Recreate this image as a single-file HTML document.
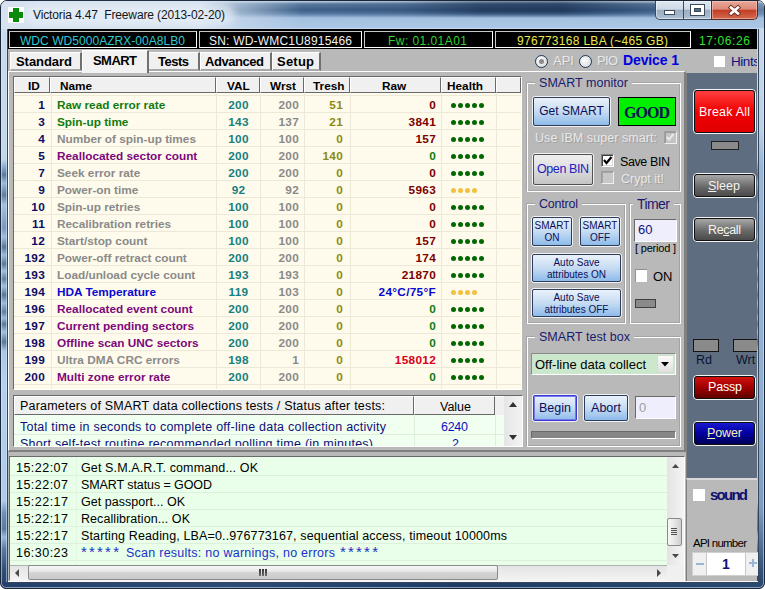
<!DOCTYPE html><html><head><meta charset="utf-8"><style>
html,body{margin:0;padding:0;}
body{width:765px;height:590px;position:relative;overflow:hidden;background:#ffffff;font-family:'Liberation Sans', sans-serif;}
div{box-sizing:border-box;}
</style></head><body>
<div style="position:absolute;left:0;top:0;width:765px;height:589px;border:1px solid #18263a;border-radius:7px 7px 6px 6px;overflow:hidden;background:linear-gradient(180deg,#cddcec 0px,#c4d6ea 158px,#8aaad0 166px,#5a7a9c 174px,#9cbcdf 182px,#5e7ea0 194px,#a4c2e2 204px,#7898bc 227px,#a0bee0 236px,#587898 246px,#9cbcdf 254px,#5a7a9a 263px,#a0c0e0 270px,#6282a4 278px,#a0c0e0 285px,#587898 294px,#9cbcdf 302px,#6080a2 311px,#9cbcdf 317px,#5a7a9a 323px,#a0c0e0 331px,#587898 341px,#a8c6e6 350px,#b4d0ee 380px,#aecbea 500px,#6f8fb6 512px,#5a7aa0 528px,#9ab8dc 536px,#5a7aa2 548px,#2e4c74 570px,#22406a 589px);"><div style="position:absolute;left:757px;top:28px;width:6px;height:560px;background:linear-gradient(180deg,#c8d9ec 0px,#bcd0e6 100px,#9ab6d6 135px,#90aed0 380px,#7e9cc2 480px,#3a5a82 535px,#22406a 560px);"></div><div style="position:absolute;left:0px;top:581px;width:763px;height:6px;background:linear-gradient(90deg,#22406a,#2c4c76 30%,#1e3c64 60%,#2a4a72);"></div><div style="position:absolute;left:0px;top:0px;width:763px;height:587px;border:1px solid rgba(220,235,250,0.55);border-radius:6px 6px 5px 5px;"></div></div>
<div style="position:absolute;left:1px;top:1px;width:763px;height:28px;border-radius:6px 6px 0 0;background:linear-gradient(180deg,#c8d6e6 0px,#5a7aa0 3px,#3e6088 9px,#5a7ea8 13px,#a4c0e0 17px,#acc8e6 27px,#d8e6f4 28px);"></div>
<div style="position:absolute;left:1px;top:1px;width:763px;height:17px;-webkit-mask-image:linear-gradient(180deg,rgba(0,0,0,0.6) 0px,#000 3px,#000 11px,rgba(0,0,0,0) 17px);background:linear-gradient(90deg,rgba(0,0,0,0) 0px,rgba(0,0,0,0) 300px,rgba(10,30,60,0.12) 400px,rgba(8,28,58,0.5) 480px,rgba(8,28,58,0.55) 560px,rgba(10,30,60,0.25) 620px,rgba(255,255,255,0.1) 700px,rgba(255,255,255,0.2) 765px);"></div>
<div style="position:absolute;left:1px;top:1px;width:763px;height:28px;border-radius:6px 6px 0 0;background:linear-gradient(90deg,rgba(214,226,240,1) 0px,rgba(214,226,240,1) 200px,rgba(205,220,236,0.6) 240px,rgba(200,215,235,0) 300px);"></div>
<div style="position:absolute;left:25px;top:5px;width:210px;height:20px;border-radius:10px;background:rgba(235,242,250,0.55);filter:blur(3px);"></div>
<div style="position:absolute;left:7px;top:29px;width:752px;height:554px;border:1px solid #34465c;border-top:none;"></div>
<div style="position:absolute;left:8px;top:581px;width:750px;height:1px;background:#f4f6f8;"></div>
<div style="position:absolute;left:6px;top:29px;width:1px;height:553px;background:rgba(210,230,250,0.55);"></div>
<div style="position:absolute;left:8px;top:7px;width:16px;height:16px;background:#ffffff;"></div>
<div style="position:absolute;left:13px;top:8px;width:6px;height:14px;background:#0a8a0a;"></div>
<div style="position:absolute;left:9px;top:12px;width:14px;height:6px;background:#0a8a0a;"></div>
<div style="position:absolute;left:33px;top:7px;line-height:16px;text-align:left;white-space:nowrap;font-size:12px;color:#151515;letter-spacing:-0.130px;">Victoria 4.47&nbsp; Freeware (2013-02-20)</div>
<div style="position:absolute;left:655px;top:1px;width:57px;height:19px;border:1px solid #3a4a5e;border-top:none;border-radius:0 0 0 5px;background:linear-gradient(180deg,#dfe8f2 0%,#cdd9e6 45%,#9aadc2 52%,#aebfd2 100%);box-shadow:inset 0 0 0 1px rgba(255,255,255,0.5);"></div>
<div style="position:absolute;left:683px;top:1px;width:1px;height:18px;background:#3a4a5e;"></div>
<div style="position:absolute;left:664px;top:10px;width:11px;height:5px;background:#fff;border:1px solid #3a4a5a;"></div>
<div style="position:absolute;left:691px;top:5px;width:13px;height:10px;background:#5a6a7e;border:3px solid #fff;border-top-width:3px;box-shadow:0 0 0 1px #3a4a5a, inset 0 0 0 1px #3a4a5a;"></div>
<div style="position:absolute;left:711px;top:1px;width:47px;height:19px;border:1px solid #5a2a24;border-top:none;border-radius:0 0 5px 0;background:linear-gradient(180deg,#e8a898 0%,#dc8a78 45%,#c43e24 52%,#d46a52 100%);box-shadow:inset 0 0 0 1px rgba(255,220,210,0.45);"></div>
<svg style="position:absolute;left:727px;top:4px" width="15" height="13" viewBox="0 0 15 13"><path d="M4 3.5 L11 9.5 M11 3.5 L4 9.5" stroke="#6a3028" stroke-width="4.4" stroke-linecap="square"/><path d="M4 3.5 L11 9.5 M11 3.5 L4 9.5" stroke="#ffffff" stroke-width="2.6" stroke-linecap="square"/></svg>
<div style="position:absolute;left:8px;top:29px;width:749px;height:552px;background:#b9b9b9;"></div>
<div style="position:absolute;left:8px;top:29px;width:749px;height:20px;background:#000;"></div>
<div style="position:absolute;left:9px;top:31px;width:188px;height:17px;border-top:1px solid #c8c8c8;border-left:1px solid #c8c8c8;border-right:1px solid #fff;border-bottom:1px solid #fff;"></div>
<div style="position:absolute;left:20px;top:34px;line-height:15px;text-align:left;white-space:nowrap;font-size:12px;color:#30c8d0;letter-spacing:0.045px;">WDC WD5000AZRX-00A8LB0</div>
<div style="position:absolute;left:199px;top:31px;width:163px;height:17px;border-top:1px solid #c8c8c8;border-left:1px solid #c8c8c8;border-right:1px solid #fff;border-bottom:1px solid #fff;"></div>
<div style="position:absolute;left:209px;top:34px;line-height:15px;text-align:left;white-space:nowrap;font-size:12px;color:#f0f0f0;letter-spacing:0.201px;">SN: WD-WMC1U8915466</div>
<div style="position:absolute;left:364px;top:31px;width:129px;height:17px;border-top:1px solid #c8c8c8;border-left:1px solid #c8c8c8;border-right:1px solid #fff;border-bottom:1px solid #fff;"></div>
<div style="position:absolute;left:388px;top:34px;line-height:15px;text-align:left;white-space:nowrap;font-size:12px;color:#30d030;letter-spacing:0.450px;">Fw: 01.01A01</div>
<div style="position:absolute;left:495px;top:31px;width:196px;height:17px;border-top:1px solid #c8c8c8;border-left:1px solid #c8c8c8;border-right:1px solid #fff;border-bottom:1px solid #fff;"></div>
<div style="position:absolute;left:517px;top:34px;line-height:15px;text-align:left;white-space:nowrap;font-size:12px;color:#e8e850;letter-spacing:0.298px;">976773168 LBA (~465 GB)</div>
<div style="position:absolute;left:699px;top:34px;line-height:15px;text-align:left;white-space:nowrap;font-size:12px;color:#30e030;letter-spacing:0.612px;">17:06:26</div>
<div style="position:absolute;left:8px;top:71px;width:678px;height:381px;border-top:1px solid #fff;border-left:1px solid #fff;border-right:2px solid #808080;border-bottom:2px solid #808080;"></div>
<div style="position:absolute;left:10px;top:52px;width:72px;height:19px;background:#f0f0f0;border-left:1px solid #fff;border-top:1px solid #fff;border-right:2px solid #707070;border-bottom:2px solid #a8a8a8;"></div>
<div style="position:absolute;left:16px;top:54px;line-height:16px;text-align:left;white-space:nowrap;font-size:13px;font-weight:bold;color:#000;letter-spacing:-0.049px;">Standard</div>
<div style="position:absolute;left:148px;top:52px;width:52px;height:19px;background:#f0f0f0;border-left:1px solid #fff;border-top:1px solid #fff;border-right:2px solid #707070;border-bottom:2px solid #a8a8a8;"></div>
<div style="position:absolute;left:158px;top:54px;line-height:16px;text-align:left;white-space:nowrap;font-size:13px;font-weight:bold;color:#000;letter-spacing:-0.500px;">Tests</div>
<div style="position:absolute;left:200px;top:52px;width:72px;height:19px;background:#f0f0f0;border-left:1px solid #fff;border-top:1px solid #fff;border-right:2px solid #707070;border-bottom:2px solid #a8a8a8;"></div>
<div style="position:absolute;left:205px;top:54px;line-height:16px;text-align:left;white-space:nowrap;font-size:13px;font-weight:bold;color:#000;letter-spacing:-0.449px;">Advanced</div>
<div style="position:absolute;left:272px;top:52px;width:49px;height:19px;background:#f0f0f0;border-left:1px solid #fff;border-top:1px solid #fff;border-right:2px solid #707070;border-bottom:2px solid #a8a8a8;"></div>
<div style="position:absolute;left:277px;top:54px;line-height:16px;text-align:left;white-space:nowrap;font-size:13px;font-weight:bold;color:#000;letter-spacing:0.219px;">Setup</div>
<div style="position:absolute;left:82px;top:50px;width:67px;height:23px;background:#f2f2f2;border-left:1px solid #fff;border-top:1px solid #fff;border-right:2px solid #707070;"></div>
<div style="position:absolute;left:93px;top:53px;line-height:16px;text-align:left;white-space:nowrap;font-size:13px;font-weight:bold;color:#000;letter-spacing:-0.555px;">SMART</div>
<div style="position:absolute;left:535px;top:55px;width:13px;height:13px;border-radius:50%;border:1px solid #1e3a5a;background:radial-gradient(circle at 40% 40%,#ffffff 0%,#e4e4e4 60%,#c8c8c8 100%);"></div>
<div style="position:absolute;left:579px;top:55px;width:13px;height:13px;border-radius:50%;border:1px solid #1e3a5a;background:radial-gradient(circle at 40% 40%,#ffffff 0%,#e4e4e4 60%,#c8c8c8 100%);"></div>
<div style="position:absolute;left:539px;top:59px;width:5px;height:5px;border-radius:50%;background:#8a8a8a;"></div>
<div style="position:absolute;left:553px;top:53px;line-height:16px;text-align:left;white-space:nowrap;font-size:13px;color:#e8e8e8;text-shadow:1px 1px 0 #a0a0a0;letter-spacing:0.016px;">API</div>
<div style="position:absolute;left:597px;top:53px;line-height:16px;text-align:left;white-space:nowrap;font-size:13px;color:#e8e8e8;text-shadow:1px 1px 0 #a0a0a0;letter-spacing:-0.703px;">PIO</div>
<div style="position:absolute;left:623px;top:52px;line-height:17px;text-align:left;white-space:nowrap;font-size:14px;font-weight:bold;color:#0000e0;letter-spacing:-0.118px;">Device 1</div>
<div style="position:absolute;left:714px;top:56px;width:11px;height:11px;background:#fff;"></div>
<div style="position:absolute;left:725px;top:50px;width:32px;height:20px;overflow:hidden;">
<div style="position:absolute;left:6px;top:3px;line-height:17px;text-align:left;white-space:nowrap;font-size:13.5px;color:#10107e;letter-spacing:-0.441px;">Hints</div>
</div>
<div style="position:absolute;left:13px;top:76px;width:509px;height:314px;background:#fffbec;border-left:1px solid #696969;border-top:1px solid #696969;border-right:1px solid #fff;border-bottom:1px solid #fff;"></div>
<div style="position:absolute;left:14px;top:77px;width:36px;height:16px;background:#f0f0f0;border-top:1px solid #fff;border-left:1px solid #fff;border-right:1px solid #696969;border-bottom:1px solid #696969;"></div>
<div style="position:absolute;left:50px;top:77px;width:166px;height:16px;background:#f0f0f0;border-top:1px solid #fff;border-left:1px solid #fff;border-right:1px solid #696969;border-bottom:1px solid #696969;"></div>
<div style="position:absolute;left:216px;top:77px;width:44px;height:16px;background:#f0f0f0;border-top:1px solid #fff;border-left:1px solid #fff;border-right:1px solid #696969;border-bottom:1px solid #696969;"></div>
<div style="position:absolute;left:260px;top:77px;width:44px;height:16px;background:#f0f0f0;border-top:1px solid #fff;border-left:1px solid #fff;border-right:1px solid #696969;border-bottom:1px solid #696969;"></div>
<div style="position:absolute;left:304px;top:77px;width:46px;height:16px;background:#f0f0f0;border-top:1px solid #fff;border-left:1px solid #fff;border-right:1px solid #696969;border-bottom:1px solid #696969;"></div>
<div style="position:absolute;left:350px;top:77px;width:91px;height:16px;background:#f0f0f0;border-top:1px solid #fff;border-left:1px solid #fff;border-right:1px solid #696969;border-bottom:1px solid #696969;"></div>
<div style="position:absolute;left:441px;top:77px;width:55px;height:16px;background:#f0f0f0;border-top:1px solid #fff;border-left:1px solid #fff;border-right:1px solid #696969;border-bottom:1px solid #696969;"></div>
<div style="position:absolute;left:496px;top:77px;width:25px;height:16px;background:#f0f0f0;border-top:1px solid #fff;border-left:1px solid #fff;border-right:1px solid #696969;border-bottom:1px solid #696969;"></div>
<div style="position:absolute;left:28px;top:79px;line-height:14px;text-align:left;white-space:nowrap;font-size:11.8px;font-weight:bold;color:#000;">ID</div>
<div style="position:absolute;left:60px;top:79px;line-height:14px;text-align:left;white-space:nowrap;font-size:11.8px;font-weight:bold;color:#000;">Name</div>
<div style="position:absolute;left:227px;top:79px;line-height:14px;text-align:left;white-space:nowrap;font-size:11.8px;font-weight:bold;color:#000;">VAL</div>
<div style="position:absolute;left:270px;top:79px;line-height:14px;text-align:left;white-space:nowrap;font-size:11.8px;font-weight:bold;color:#000;">Wrst</div>
<div style="position:absolute;left:313px;top:79px;line-height:14px;text-align:left;white-space:nowrap;font-size:11.8px;font-weight:bold;color:#000;">Tresh</div>
<div style="position:absolute;left:382px;top:79px;line-height:14px;text-align:left;white-space:nowrap;font-size:11.8px;font-weight:bold;color:#000;">Raw</div>
<div style="position:absolute;left:447px;top:79px;line-height:14px;text-align:left;white-space:nowrap;font-size:11.8px;font-weight:bold;color:#000;">Health</div>
<div style="position:absolute;left:14px;top:95px;width:507px;height:1px;background:#ece9d8;"></div>
<div style="position:absolute;left:14px;top:112px;width:507px;height:1px;background:#ece9d8;"></div>
<div style="position:absolute;left:14px;top:129px;width:507px;height:1px;background:#ece9d8;"></div>
<div style="position:absolute;left:14px;top:146px;width:507px;height:1px;background:#ece9d8;"></div>
<div style="position:absolute;left:14px;top:163px;width:507px;height:1px;background:#ece9d8;"></div>
<div style="position:absolute;left:14px;top:180px;width:507px;height:1px;background:#ece9d8;"></div>
<div style="position:absolute;left:14px;top:197px;width:507px;height:1px;background:#ece9d8;"></div>
<div style="position:absolute;left:14px;top:214px;width:507px;height:1px;background:#ece9d8;"></div>
<div style="position:absolute;left:14px;top:231px;width:507px;height:1px;background:#ece9d8;"></div>
<div style="position:absolute;left:14px;top:248px;width:507px;height:1px;background:#ece9d8;"></div>
<div style="position:absolute;left:14px;top:265px;width:507px;height:1px;background:#ece9d8;"></div>
<div style="position:absolute;left:14px;top:282px;width:507px;height:1px;background:#ece9d8;"></div>
<div style="position:absolute;left:14px;top:299px;width:507px;height:1px;background:#ece9d8;"></div>
<div style="position:absolute;left:14px;top:316px;width:507px;height:1px;background:#ece9d8;"></div>
<div style="position:absolute;left:14px;top:333px;width:507px;height:1px;background:#ece9d8;"></div>
<div style="position:absolute;left:14px;top:350px;width:507px;height:1px;background:#ece9d8;"></div>
<div style="position:absolute;left:14px;top:367px;width:507px;height:1px;background:#ece9d8;"></div>
<div style="position:absolute;left:14px;top:384px;width:507px;height:1px;background:#ece9d8;"></div>
<div style="position:absolute;left:51px;top:93px;width:1px;height:296px;background:#ece9d8;"></div>
<div style="position:absolute;left:216px;top:93px;width:1px;height:296px;background:#ece9d8;"></div>
<div style="position:absolute;left:260px;top:93px;width:1px;height:296px;background:#ece9d8;"></div>
<div style="position:absolute;left:304px;top:93px;width:1px;height:296px;background:#ece9d8;"></div>
<div style="position:absolute;left:350px;top:93px;width:1px;height:296px;background:#ece9d8;"></div>
<div style="position:absolute;left:441px;top:93px;width:1px;height:296px;background:#ece9d8;"></div>
<div style="position:absolute;left:496px;top:93px;width:1px;height:296px;background:#ece9d8;"></div>
<div style="position:absolute;left:14px;top:97px;width:31px;line-height:16px;text-align:right;white-space:nowrap;font-size:11.8px;font-weight:bold;letter-spacing:0.3px;color:#0c0c66;">1</div>
<div style="position:absolute;left:57px;top:97px;line-height:16px;text-align:left;white-space:nowrap;font-size:11.8px;font-weight:bold;color:#107c10;">Raw read error rate</div>
<div style="position:absolute;left:216px;top:97px;width:45px;line-height:16px;text-align:center;white-space:nowrap;font-size:11.8px;font-weight:bold;letter-spacing:0.3px;color:#168080;">200</div>
<div style="position:absolute;left:260px;top:97px;width:39px;line-height:16px;text-align:right;white-space:nowrap;font-size:11.8px;font-weight:bold;letter-spacing:0.3px;color:#8a8a8a;">200</div>
<div style="position:absolute;left:304px;top:97px;width:39px;line-height:16px;text-align:right;white-space:nowrap;font-size:11.8px;font-weight:bold;letter-spacing:0.3px;color:#8c8c10;">51</div>
<div style="position:absolute;left:350px;top:97px;width:86px;line-height:16px;text-align:right;white-space:nowrap;font-size:11.8px;font-weight:bold;letter-spacing:0.3px;color:#7c0000;">0</div>
<div style="position:absolute;left:451px;top:103px;width:5px;height:5px;border-radius:50%;background:#006800;"></div>
<div style="position:absolute;left:458px;top:103px;width:5px;height:5px;border-radius:50%;background:#006800;"></div>
<div style="position:absolute;left:465px;top:103px;width:5px;height:5px;border-radius:50%;background:#006800;"></div>
<div style="position:absolute;left:472px;top:103px;width:5px;height:5px;border-radius:50%;background:#006800;"></div>
<div style="position:absolute;left:479px;top:103px;width:5px;height:5px;border-radius:50%;background:#006800;"></div>
<div style="position:absolute;left:14px;top:114px;width:31px;line-height:16px;text-align:right;white-space:nowrap;font-size:11.8px;font-weight:bold;letter-spacing:0.3px;color:#0c0c66;">3</div>
<div style="position:absolute;left:57px;top:114px;line-height:16px;text-align:left;white-space:nowrap;font-size:11.8px;font-weight:bold;color:#107c10;">Spin-up time</div>
<div style="position:absolute;left:216px;top:114px;width:45px;line-height:16px;text-align:center;white-space:nowrap;font-size:11.8px;font-weight:bold;letter-spacing:0.3px;color:#168080;">143</div>
<div style="position:absolute;left:260px;top:114px;width:39px;line-height:16px;text-align:right;white-space:nowrap;font-size:11.8px;font-weight:bold;letter-spacing:0.3px;color:#8a8a8a;">137</div>
<div style="position:absolute;left:304px;top:114px;width:39px;line-height:16px;text-align:right;white-space:nowrap;font-size:11.8px;font-weight:bold;letter-spacing:0.3px;color:#8c8c10;">21</div>
<div style="position:absolute;left:350px;top:114px;width:86px;line-height:16px;text-align:right;white-space:nowrap;font-size:11.8px;font-weight:bold;letter-spacing:0.3px;color:#7c0000;">3841</div>
<div style="position:absolute;left:451px;top:120px;width:5px;height:5px;border-radius:50%;background:#006800;"></div>
<div style="position:absolute;left:458px;top:120px;width:5px;height:5px;border-radius:50%;background:#006800;"></div>
<div style="position:absolute;left:465px;top:120px;width:5px;height:5px;border-radius:50%;background:#006800;"></div>
<div style="position:absolute;left:472px;top:120px;width:5px;height:5px;border-radius:50%;background:#006800;"></div>
<div style="position:absolute;left:479px;top:120px;width:5px;height:5px;border-radius:50%;background:#006800;"></div>
<div style="position:absolute;left:14px;top:131px;width:31px;line-height:16px;text-align:right;white-space:nowrap;font-size:11.8px;font-weight:bold;letter-spacing:0.3px;color:#0c0c66;">4</div>
<div style="position:absolute;left:57px;top:131px;line-height:16px;text-align:left;white-space:nowrap;font-size:11.8px;font-weight:bold;color:#8a8a8a;">Number of spin-up times</div>
<div style="position:absolute;left:216px;top:131px;width:45px;line-height:16px;text-align:center;white-space:nowrap;font-size:11.8px;font-weight:bold;letter-spacing:0.3px;color:#168080;">100</div>
<div style="position:absolute;left:260px;top:131px;width:39px;line-height:16px;text-align:right;white-space:nowrap;font-size:11.8px;font-weight:bold;letter-spacing:0.3px;color:#8a8a8a;">100</div>
<div style="position:absolute;left:304px;top:131px;width:39px;line-height:16px;text-align:right;white-space:nowrap;font-size:11.8px;font-weight:bold;letter-spacing:0.3px;color:#8c8c10;">0</div>
<div style="position:absolute;left:350px;top:131px;width:86px;line-height:16px;text-align:right;white-space:nowrap;font-size:11.8px;font-weight:bold;letter-spacing:0.3px;color:#7c0000;">157</div>
<div style="position:absolute;left:451px;top:137px;width:5px;height:5px;border-radius:50%;background:#006800;"></div>
<div style="position:absolute;left:458px;top:137px;width:5px;height:5px;border-radius:50%;background:#006800;"></div>
<div style="position:absolute;left:465px;top:137px;width:5px;height:5px;border-radius:50%;background:#006800;"></div>
<div style="position:absolute;left:472px;top:137px;width:5px;height:5px;border-radius:50%;background:#006800;"></div>
<div style="position:absolute;left:479px;top:137px;width:5px;height:5px;border-radius:50%;background:#006800;"></div>
<div style="position:absolute;left:14px;top:148px;width:31px;line-height:16px;text-align:right;white-space:nowrap;font-size:11.8px;font-weight:bold;letter-spacing:0.3px;color:#0c0c66;">5</div>
<div style="position:absolute;left:57px;top:148px;line-height:16px;text-align:left;white-space:nowrap;font-size:11.8px;font-weight:bold;color:#7c087c;">Reallocated sector count</div>
<div style="position:absolute;left:216px;top:148px;width:45px;line-height:16px;text-align:center;white-space:nowrap;font-size:11.8px;font-weight:bold;letter-spacing:0.3px;color:#168080;">200</div>
<div style="position:absolute;left:260px;top:148px;width:39px;line-height:16px;text-align:right;white-space:nowrap;font-size:11.8px;font-weight:bold;letter-spacing:0.3px;color:#8a8a8a;">200</div>
<div style="position:absolute;left:304px;top:148px;width:39px;line-height:16px;text-align:right;white-space:nowrap;font-size:11.8px;font-weight:bold;letter-spacing:0.3px;color:#8c8c10;">140</div>
<div style="position:absolute;left:350px;top:148px;width:86px;line-height:16px;text-align:right;white-space:nowrap;font-size:11.8px;font-weight:bold;letter-spacing:0.3px;color:#107c10;">0</div>
<div style="position:absolute;left:451px;top:154px;width:5px;height:5px;border-radius:50%;background:#006800;"></div>
<div style="position:absolute;left:458px;top:154px;width:5px;height:5px;border-radius:50%;background:#006800;"></div>
<div style="position:absolute;left:465px;top:154px;width:5px;height:5px;border-radius:50%;background:#006800;"></div>
<div style="position:absolute;left:472px;top:154px;width:5px;height:5px;border-radius:50%;background:#006800;"></div>
<div style="position:absolute;left:479px;top:154px;width:5px;height:5px;border-radius:50%;background:#006800;"></div>
<div style="position:absolute;left:14px;top:165px;width:31px;line-height:16px;text-align:right;white-space:nowrap;font-size:11.8px;font-weight:bold;letter-spacing:0.3px;color:#0c0c66;">7</div>
<div style="position:absolute;left:57px;top:165px;line-height:16px;text-align:left;white-space:nowrap;font-size:11.8px;font-weight:bold;color:#8a8a8a;">Seek error rate</div>
<div style="position:absolute;left:216px;top:165px;width:45px;line-height:16px;text-align:center;white-space:nowrap;font-size:11.8px;font-weight:bold;letter-spacing:0.3px;color:#168080;">200</div>
<div style="position:absolute;left:260px;top:165px;width:39px;line-height:16px;text-align:right;white-space:nowrap;font-size:11.8px;font-weight:bold;letter-spacing:0.3px;color:#8a8a8a;">200</div>
<div style="position:absolute;left:304px;top:165px;width:39px;line-height:16px;text-align:right;white-space:nowrap;font-size:11.8px;font-weight:bold;letter-spacing:0.3px;color:#8c8c10;">0</div>
<div style="position:absolute;left:350px;top:165px;width:86px;line-height:16px;text-align:right;white-space:nowrap;font-size:11.8px;font-weight:bold;letter-spacing:0.3px;color:#7c0000;">0</div>
<div style="position:absolute;left:451px;top:171px;width:5px;height:5px;border-radius:50%;background:#006800;"></div>
<div style="position:absolute;left:458px;top:171px;width:5px;height:5px;border-radius:50%;background:#006800;"></div>
<div style="position:absolute;left:465px;top:171px;width:5px;height:5px;border-radius:50%;background:#006800;"></div>
<div style="position:absolute;left:472px;top:171px;width:5px;height:5px;border-radius:50%;background:#006800;"></div>
<div style="position:absolute;left:479px;top:171px;width:5px;height:5px;border-radius:50%;background:#006800;"></div>
<div style="position:absolute;left:14px;top:182px;width:31px;line-height:16px;text-align:right;white-space:nowrap;font-size:11.8px;font-weight:bold;letter-spacing:0.3px;color:#0c0c66;">9</div>
<div style="position:absolute;left:57px;top:182px;line-height:16px;text-align:left;white-space:nowrap;font-size:11.8px;font-weight:bold;color:#8a8a8a;">Power-on time</div>
<div style="position:absolute;left:216px;top:182px;width:45px;line-height:16px;text-align:center;white-space:nowrap;font-size:11.8px;font-weight:bold;letter-spacing:0.3px;color:#168080;">92</div>
<div style="position:absolute;left:260px;top:182px;width:39px;line-height:16px;text-align:right;white-space:nowrap;font-size:11.8px;font-weight:bold;letter-spacing:0.3px;color:#8a8a8a;">92</div>
<div style="position:absolute;left:304px;top:182px;width:39px;line-height:16px;text-align:right;white-space:nowrap;font-size:11.8px;font-weight:bold;letter-spacing:0.3px;color:#8c8c10;">0</div>
<div style="position:absolute;left:350px;top:182px;width:86px;line-height:16px;text-align:right;white-space:nowrap;font-size:11.8px;font-weight:bold;letter-spacing:0.3px;color:#7c0000;">5963</div>
<div style="position:absolute;left:451px;top:188px;width:5px;height:5px;border-radius:50%;background:#f4c040;"></div>
<div style="position:absolute;left:458px;top:188px;width:5px;height:5px;border-radius:50%;background:#f4c040;"></div>
<div style="position:absolute;left:465px;top:188px;width:5px;height:5px;border-radius:50%;background:#f4c040;"></div>
<div style="position:absolute;left:472px;top:188px;width:5px;height:5px;border-radius:50%;background:#f4c040;"></div>
<div style="position:absolute;left:14px;top:199px;width:31px;line-height:16px;text-align:right;white-space:nowrap;font-size:11.8px;font-weight:bold;letter-spacing:0.3px;color:#0c0c66;">10</div>
<div style="position:absolute;left:57px;top:199px;line-height:16px;text-align:left;white-space:nowrap;font-size:11.8px;font-weight:bold;color:#8a8a8a;">Spin-up retries</div>
<div style="position:absolute;left:216px;top:199px;width:45px;line-height:16px;text-align:center;white-space:nowrap;font-size:11.8px;font-weight:bold;letter-spacing:0.3px;color:#168080;">100</div>
<div style="position:absolute;left:260px;top:199px;width:39px;line-height:16px;text-align:right;white-space:nowrap;font-size:11.8px;font-weight:bold;letter-spacing:0.3px;color:#8a8a8a;">100</div>
<div style="position:absolute;left:304px;top:199px;width:39px;line-height:16px;text-align:right;white-space:nowrap;font-size:11.8px;font-weight:bold;letter-spacing:0.3px;color:#8c8c10;">0</div>
<div style="position:absolute;left:350px;top:199px;width:86px;line-height:16px;text-align:right;white-space:nowrap;font-size:11.8px;font-weight:bold;letter-spacing:0.3px;color:#7c0000;">0</div>
<div style="position:absolute;left:451px;top:205px;width:5px;height:5px;border-radius:50%;background:#006800;"></div>
<div style="position:absolute;left:458px;top:205px;width:5px;height:5px;border-radius:50%;background:#006800;"></div>
<div style="position:absolute;left:465px;top:205px;width:5px;height:5px;border-radius:50%;background:#006800;"></div>
<div style="position:absolute;left:472px;top:205px;width:5px;height:5px;border-radius:50%;background:#006800;"></div>
<div style="position:absolute;left:479px;top:205px;width:5px;height:5px;border-radius:50%;background:#006800;"></div>
<div style="position:absolute;left:14px;top:216px;width:31px;line-height:16px;text-align:right;white-space:nowrap;font-size:11.8px;font-weight:bold;letter-spacing:0.3px;color:#0c0c66;">11</div>
<div style="position:absolute;left:57px;top:216px;line-height:16px;text-align:left;white-space:nowrap;font-size:11.8px;font-weight:bold;color:#8a8a8a;">Recalibration retries</div>
<div style="position:absolute;left:216px;top:216px;width:45px;line-height:16px;text-align:center;white-space:nowrap;font-size:11.8px;font-weight:bold;letter-spacing:0.3px;color:#168080;">100</div>
<div style="position:absolute;left:260px;top:216px;width:39px;line-height:16px;text-align:right;white-space:nowrap;font-size:11.8px;font-weight:bold;letter-spacing:0.3px;color:#8a8a8a;">100</div>
<div style="position:absolute;left:304px;top:216px;width:39px;line-height:16px;text-align:right;white-space:nowrap;font-size:11.8px;font-weight:bold;letter-spacing:0.3px;color:#8c8c10;">0</div>
<div style="position:absolute;left:350px;top:216px;width:86px;line-height:16px;text-align:right;white-space:nowrap;font-size:11.8px;font-weight:bold;letter-spacing:0.3px;color:#7c0000;">0</div>
<div style="position:absolute;left:451px;top:222px;width:5px;height:5px;border-radius:50%;background:#006800;"></div>
<div style="position:absolute;left:458px;top:222px;width:5px;height:5px;border-radius:50%;background:#006800;"></div>
<div style="position:absolute;left:465px;top:222px;width:5px;height:5px;border-radius:50%;background:#006800;"></div>
<div style="position:absolute;left:472px;top:222px;width:5px;height:5px;border-radius:50%;background:#006800;"></div>
<div style="position:absolute;left:479px;top:222px;width:5px;height:5px;border-radius:50%;background:#006800;"></div>
<div style="position:absolute;left:14px;top:233px;width:31px;line-height:16px;text-align:right;white-space:nowrap;font-size:11.8px;font-weight:bold;letter-spacing:0.3px;color:#0c0c66;">12</div>
<div style="position:absolute;left:57px;top:233px;line-height:16px;text-align:left;white-space:nowrap;font-size:11.8px;font-weight:bold;color:#8a8a8a;">Start/stop count</div>
<div style="position:absolute;left:216px;top:233px;width:45px;line-height:16px;text-align:center;white-space:nowrap;font-size:11.8px;font-weight:bold;letter-spacing:0.3px;color:#168080;">100</div>
<div style="position:absolute;left:260px;top:233px;width:39px;line-height:16px;text-align:right;white-space:nowrap;font-size:11.8px;font-weight:bold;letter-spacing:0.3px;color:#8a8a8a;">100</div>
<div style="position:absolute;left:304px;top:233px;width:39px;line-height:16px;text-align:right;white-space:nowrap;font-size:11.8px;font-weight:bold;letter-spacing:0.3px;color:#8c8c10;">0</div>
<div style="position:absolute;left:350px;top:233px;width:86px;line-height:16px;text-align:right;white-space:nowrap;font-size:11.8px;font-weight:bold;letter-spacing:0.3px;color:#7c0000;">157</div>
<div style="position:absolute;left:451px;top:239px;width:5px;height:5px;border-radius:50%;background:#006800;"></div>
<div style="position:absolute;left:458px;top:239px;width:5px;height:5px;border-radius:50%;background:#006800;"></div>
<div style="position:absolute;left:465px;top:239px;width:5px;height:5px;border-radius:50%;background:#006800;"></div>
<div style="position:absolute;left:472px;top:239px;width:5px;height:5px;border-radius:50%;background:#006800;"></div>
<div style="position:absolute;left:479px;top:239px;width:5px;height:5px;border-radius:50%;background:#006800;"></div>
<div style="position:absolute;left:14px;top:250px;width:31px;line-height:16px;text-align:right;white-space:nowrap;font-size:11.8px;font-weight:bold;letter-spacing:0.3px;color:#0c0c66;">192</div>
<div style="position:absolute;left:57px;top:250px;line-height:16px;text-align:left;white-space:nowrap;font-size:11.8px;font-weight:bold;color:#8a8a8a;">Power-off retract count</div>
<div style="position:absolute;left:216px;top:250px;width:45px;line-height:16px;text-align:center;white-space:nowrap;font-size:11.8px;font-weight:bold;letter-spacing:0.3px;color:#168080;">200</div>
<div style="position:absolute;left:260px;top:250px;width:39px;line-height:16px;text-align:right;white-space:nowrap;font-size:11.8px;font-weight:bold;letter-spacing:0.3px;color:#8a8a8a;">200</div>
<div style="position:absolute;left:304px;top:250px;width:39px;line-height:16px;text-align:right;white-space:nowrap;font-size:11.8px;font-weight:bold;letter-spacing:0.3px;color:#8c8c10;">0</div>
<div style="position:absolute;left:350px;top:250px;width:86px;line-height:16px;text-align:right;white-space:nowrap;font-size:11.8px;font-weight:bold;letter-spacing:0.3px;color:#7c0000;">174</div>
<div style="position:absolute;left:451px;top:256px;width:5px;height:5px;border-radius:50%;background:#006800;"></div>
<div style="position:absolute;left:458px;top:256px;width:5px;height:5px;border-radius:50%;background:#006800;"></div>
<div style="position:absolute;left:465px;top:256px;width:5px;height:5px;border-radius:50%;background:#006800;"></div>
<div style="position:absolute;left:472px;top:256px;width:5px;height:5px;border-radius:50%;background:#006800;"></div>
<div style="position:absolute;left:479px;top:256px;width:5px;height:5px;border-radius:50%;background:#006800;"></div>
<div style="position:absolute;left:14px;top:267px;width:31px;line-height:16px;text-align:right;white-space:nowrap;font-size:11.8px;font-weight:bold;letter-spacing:0.3px;color:#0c0c66;">193</div>
<div style="position:absolute;left:57px;top:267px;line-height:16px;text-align:left;white-space:nowrap;font-size:11.8px;font-weight:bold;color:#8a8a8a;">Load/unload cycle count</div>
<div style="position:absolute;left:216px;top:267px;width:45px;line-height:16px;text-align:center;white-space:nowrap;font-size:11.8px;font-weight:bold;letter-spacing:0.3px;color:#168080;">193</div>
<div style="position:absolute;left:260px;top:267px;width:39px;line-height:16px;text-align:right;white-space:nowrap;font-size:11.8px;font-weight:bold;letter-spacing:0.3px;color:#8a8a8a;">193</div>
<div style="position:absolute;left:304px;top:267px;width:39px;line-height:16px;text-align:right;white-space:nowrap;font-size:11.8px;font-weight:bold;letter-spacing:0.3px;color:#8c8c10;">0</div>
<div style="position:absolute;left:350px;top:267px;width:86px;line-height:16px;text-align:right;white-space:nowrap;font-size:11.8px;font-weight:bold;letter-spacing:0.3px;color:#7c0000;">21870</div>
<div style="position:absolute;left:451px;top:273px;width:5px;height:5px;border-radius:50%;background:#006800;"></div>
<div style="position:absolute;left:458px;top:273px;width:5px;height:5px;border-radius:50%;background:#006800;"></div>
<div style="position:absolute;left:465px;top:273px;width:5px;height:5px;border-radius:50%;background:#006800;"></div>
<div style="position:absolute;left:472px;top:273px;width:5px;height:5px;border-radius:50%;background:#006800;"></div>
<div style="position:absolute;left:479px;top:273px;width:5px;height:5px;border-radius:50%;background:#006800;"></div>
<div style="position:absolute;left:14px;top:284px;width:31px;line-height:16px;text-align:right;white-space:nowrap;font-size:11.8px;font-weight:bold;letter-spacing:0.3px;color:#0c0c66;">194</div>
<div style="position:absolute;left:57px;top:284px;line-height:16px;text-align:left;white-space:nowrap;font-size:11.8px;font-weight:bold;color:#0808d0;">HDA Temperature</div>
<div style="position:absolute;left:216px;top:284px;width:45px;line-height:16px;text-align:center;white-space:nowrap;font-size:11.8px;font-weight:bold;letter-spacing:0.3px;color:#168080;">119</div>
<div style="position:absolute;left:260px;top:284px;width:39px;line-height:16px;text-align:right;white-space:nowrap;font-size:11.8px;font-weight:bold;letter-spacing:0.3px;color:#8a8a8a;">103</div>
<div style="position:absolute;left:304px;top:284px;width:39px;line-height:16px;text-align:right;white-space:nowrap;font-size:11.8px;font-weight:bold;letter-spacing:0.3px;color:#8c8c10;">0</div>
<div style="position:absolute;left:350px;top:284px;width:86px;line-height:16px;text-align:right;white-space:nowrap;font-size:11.8px;font-weight:bold;letter-spacing:0.3px;color:#0808d0;">24°C/75°F</div>
<div style="position:absolute;left:451px;top:290px;width:5px;height:5px;border-radius:50%;background:#f4c040;"></div>
<div style="position:absolute;left:458px;top:290px;width:5px;height:5px;border-radius:50%;background:#f4c040;"></div>
<div style="position:absolute;left:465px;top:290px;width:5px;height:5px;border-radius:50%;background:#f4c040;"></div>
<div style="position:absolute;left:472px;top:290px;width:5px;height:5px;border-radius:50%;background:#f4c040;"></div>
<div style="position:absolute;left:14px;top:301px;width:31px;line-height:16px;text-align:right;white-space:nowrap;font-size:11.8px;font-weight:bold;letter-spacing:0.3px;color:#0c0c66;">196</div>
<div style="position:absolute;left:57px;top:301px;line-height:16px;text-align:left;white-space:nowrap;font-size:11.8px;font-weight:bold;color:#7c087c;">Reallocated event count</div>
<div style="position:absolute;left:216px;top:301px;width:45px;line-height:16px;text-align:center;white-space:nowrap;font-size:11.8px;font-weight:bold;letter-spacing:0.3px;color:#168080;">200</div>
<div style="position:absolute;left:260px;top:301px;width:39px;line-height:16px;text-align:right;white-space:nowrap;font-size:11.8px;font-weight:bold;letter-spacing:0.3px;color:#8a8a8a;">200</div>
<div style="position:absolute;left:304px;top:301px;width:39px;line-height:16px;text-align:right;white-space:nowrap;font-size:11.8px;font-weight:bold;letter-spacing:0.3px;color:#8c8c10;">0</div>
<div style="position:absolute;left:350px;top:301px;width:86px;line-height:16px;text-align:right;white-space:nowrap;font-size:11.8px;font-weight:bold;letter-spacing:0.3px;color:#107c10;">0</div>
<div style="position:absolute;left:451px;top:307px;width:5px;height:5px;border-radius:50%;background:#006800;"></div>
<div style="position:absolute;left:458px;top:307px;width:5px;height:5px;border-radius:50%;background:#006800;"></div>
<div style="position:absolute;left:465px;top:307px;width:5px;height:5px;border-radius:50%;background:#006800;"></div>
<div style="position:absolute;left:472px;top:307px;width:5px;height:5px;border-radius:50%;background:#006800;"></div>
<div style="position:absolute;left:479px;top:307px;width:5px;height:5px;border-radius:50%;background:#006800;"></div>
<div style="position:absolute;left:14px;top:318px;width:31px;line-height:16px;text-align:right;white-space:nowrap;font-size:11.8px;font-weight:bold;letter-spacing:0.3px;color:#0c0c66;">197</div>
<div style="position:absolute;left:57px;top:318px;line-height:16px;text-align:left;white-space:nowrap;font-size:11.8px;font-weight:bold;color:#7c087c;">Current pending sectors</div>
<div style="position:absolute;left:216px;top:318px;width:45px;line-height:16px;text-align:center;white-space:nowrap;font-size:11.8px;font-weight:bold;letter-spacing:0.3px;color:#168080;">200</div>
<div style="position:absolute;left:260px;top:318px;width:39px;line-height:16px;text-align:right;white-space:nowrap;font-size:11.8px;font-weight:bold;letter-spacing:0.3px;color:#8a8a8a;">200</div>
<div style="position:absolute;left:304px;top:318px;width:39px;line-height:16px;text-align:right;white-space:nowrap;font-size:11.8px;font-weight:bold;letter-spacing:0.3px;color:#8c8c10;">0</div>
<div style="position:absolute;left:350px;top:318px;width:86px;line-height:16px;text-align:right;white-space:nowrap;font-size:11.8px;font-weight:bold;letter-spacing:0.3px;color:#107c10;">0</div>
<div style="position:absolute;left:451px;top:324px;width:5px;height:5px;border-radius:50%;background:#006800;"></div>
<div style="position:absolute;left:458px;top:324px;width:5px;height:5px;border-radius:50%;background:#006800;"></div>
<div style="position:absolute;left:465px;top:324px;width:5px;height:5px;border-radius:50%;background:#006800;"></div>
<div style="position:absolute;left:472px;top:324px;width:5px;height:5px;border-radius:50%;background:#006800;"></div>
<div style="position:absolute;left:479px;top:324px;width:5px;height:5px;border-radius:50%;background:#006800;"></div>
<div style="position:absolute;left:14px;top:335px;width:31px;line-height:16px;text-align:right;white-space:nowrap;font-size:11.8px;font-weight:bold;letter-spacing:0.3px;color:#0c0c66;">198</div>
<div style="position:absolute;left:57px;top:335px;line-height:16px;text-align:left;white-space:nowrap;font-size:11.8px;font-weight:bold;color:#7c087c;">Offline scan UNC sectors</div>
<div style="position:absolute;left:216px;top:335px;width:45px;line-height:16px;text-align:center;white-space:nowrap;font-size:11.8px;font-weight:bold;letter-spacing:0.3px;color:#168080;">200</div>
<div style="position:absolute;left:260px;top:335px;width:39px;line-height:16px;text-align:right;white-space:nowrap;font-size:11.8px;font-weight:bold;letter-spacing:0.3px;color:#8a8a8a;">200</div>
<div style="position:absolute;left:304px;top:335px;width:39px;line-height:16px;text-align:right;white-space:nowrap;font-size:11.8px;font-weight:bold;letter-spacing:0.3px;color:#8c8c10;">0</div>
<div style="position:absolute;left:350px;top:335px;width:86px;line-height:16px;text-align:right;white-space:nowrap;font-size:11.8px;font-weight:bold;letter-spacing:0.3px;color:#107c10;">0</div>
<div style="position:absolute;left:451px;top:341px;width:5px;height:5px;border-radius:50%;background:#006800;"></div>
<div style="position:absolute;left:458px;top:341px;width:5px;height:5px;border-radius:50%;background:#006800;"></div>
<div style="position:absolute;left:465px;top:341px;width:5px;height:5px;border-radius:50%;background:#006800;"></div>
<div style="position:absolute;left:472px;top:341px;width:5px;height:5px;border-radius:50%;background:#006800;"></div>
<div style="position:absolute;left:479px;top:341px;width:5px;height:5px;border-radius:50%;background:#006800;"></div>
<div style="position:absolute;left:14px;top:352px;width:31px;line-height:16px;text-align:right;white-space:nowrap;font-size:11.8px;font-weight:bold;letter-spacing:0.3px;color:#0c0c66;">199</div>
<div style="position:absolute;left:57px;top:352px;line-height:16px;text-align:left;white-space:nowrap;font-size:11.8px;font-weight:bold;color:#8a8a8a;">Ultra DMA CRC errors</div>
<div style="position:absolute;left:216px;top:352px;width:45px;line-height:16px;text-align:center;white-space:nowrap;font-size:11.8px;font-weight:bold;letter-spacing:0.3px;color:#168080;">198</div>
<div style="position:absolute;left:260px;top:352px;width:39px;line-height:16px;text-align:right;white-space:nowrap;font-size:11.8px;font-weight:bold;letter-spacing:0.3px;color:#8a8a8a;">1</div>
<div style="position:absolute;left:304px;top:352px;width:39px;line-height:16px;text-align:right;white-space:nowrap;font-size:11.8px;font-weight:bold;letter-spacing:0.3px;color:#8c8c10;">0</div>
<div style="position:absolute;left:350px;top:352px;width:86px;line-height:16px;text-align:right;white-space:nowrap;font-size:11.8px;font-weight:bold;letter-spacing:0.3px;color:#d8001c;">158012</div>
<div style="position:absolute;left:451px;top:358px;width:5px;height:5px;border-radius:50%;background:#006800;"></div>
<div style="position:absolute;left:458px;top:358px;width:5px;height:5px;border-radius:50%;background:#006800;"></div>
<div style="position:absolute;left:465px;top:358px;width:5px;height:5px;border-radius:50%;background:#006800;"></div>
<div style="position:absolute;left:472px;top:358px;width:5px;height:5px;border-radius:50%;background:#006800;"></div>
<div style="position:absolute;left:479px;top:358px;width:5px;height:5px;border-radius:50%;background:#006800;"></div>
<div style="position:absolute;left:14px;top:369px;width:31px;line-height:16px;text-align:right;white-space:nowrap;font-size:11.8px;font-weight:bold;letter-spacing:0.3px;color:#0c0c66;">200</div>
<div style="position:absolute;left:57px;top:369px;line-height:16px;text-align:left;white-space:nowrap;font-size:11.8px;font-weight:bold;color:#7c087c;">Multi zone error rate</div>
<div style="position:absolute;left:216px;top:369px;width:45px;line-height:16px;text-align:center;white-space:nowrap;font-size:11.8px;font-weight:bold;letter-spacing:0.3px;color:#168080;">200</div>
<div style="position:absolute;left:260px;top:369px;width:39px;line-height:16px;text-align:right;white-space:nowrap;font-size:11.8px;font-weight:bold;letter-spacing:0.3px;color:#8a8a8a;">200</div>
<div style="position:absolute;left:304px;top:369px;width:39px;line-height:16px;text-align:right;white-space:nowrap;font-size:11.8px;font-weight:bold;letter-spacing:0.3px;color:#8c8c10;">0</div>
<div style="position:absolute;left:350px;top:369px;width:86px;line-height:16px;text-align:right;white-space:nowrap;font-size:11.8px;font-weight:bold;letter-spacing:0.3px;color:#107c10;">0</div>
<div style="position:absolute;left:451px;top:375px;width:5px;height:5px;border-radius:50%;background:#006800;"></div>
<div style="position:absolute;left:458px;top:375px;width:5px;height:5px;border-radius:50%;background:#006800;"></div>
<div style="position:absolute;left:465px;top:375px;width:5px;height:5px;border-radius:50%;background:#006800;"></div>
<div style="position:absolute;left:472px;top:375px;width:5px;height:5px;border-radius:50%;background:#006800;"></div>
<div style="position:absolute;left:479px;top:375px;width:5px;height:5px;border-radius:50%;background:#006800;"></div>
<div style="position:absolute;left:13px;top:395px;width:510px;height:52px;background:#f0fff0;border-left:1px solid #696969;border-top:1px solid #696969;border-right:1px solid #fff;border-bottom:1px solid #fff;"></div>
<div style="position:absolute;left:14px;top:396px;width:400px;height:19px;background:#f0f0f0;border-top:1px solid #fff;border-left:1px solid #fff;border-right:1px solid #696969;border-bottom:1px solid #696969;"></div>
<div style="position:absolute;left:414px;top:396px;width:81px;height:19px;background:#f0f0f0;border-top:1px solid #fff;border-left:1px solid #fff;border-right:1px solid #696969;border-bottom:1px solid #696969;"></div>
<div style="position:absolute;left:495px;top:396px;width:9px;height:19px;background:#f0f0f0;border-top:1px solid #fff;"></div>
<div style="position:absolute;left:504px;top:396px;width:18px;height:50px;background:linear-gradient(90deg,#e6e6e6,#f2f2f2);"></div>
<svg style="position:absolute;left:509px;top:402px" width="8" height="5"><path d="M0 5 L4 0 L8 5 Z" fill="#303030"/></svg>
<svg style="position:absolute;left:509px;top:435px" width="8" height="5"><path d="M0 0 L4 5 L8 0 Z" fill="#303030"/></svg>
<div style="position:absolute;left:20px;top:398px;line-height:16px;text-align:left;white-space:nowrap;font-size:12.5px;color:#000;letter-spacing:0.199px;">Parameters of SMART data collections tests / Status after tests:</div>
<div style="position:absolute;left:440px;top:399px;line-height:16px;text-align:left;white-space:nowrap;font-size:12.5px;color:#000;letter-spacing:-0.012px;">Value</div>
<div style="position:absolute;left:14px;top:434px;width:490px;height:1px;background:#ddeedd;"></div>
<div style="position:absolute;left:414px;top:415px;width:1px;height:31px;background:#ddeedd;"></div>
<div style="position:absolute;left:495px;top:415px;width:1px;height:31px;background:#ddeedd;"></div>
<div style="position:absolute;left:20px;top:419px;line-height:16px;text-align:left;white-space:nowrap;font-size:12.5px;color:#10107a;letter-spacing:0.232px;">Total time in seconds to complete off-line data collection activity</div>
<div style="position:absolute;left:441px;top:419px;line-height:16px;text-align:left;white-space:nowrap;font-size:12.5px;color:#1010c0;letter-spacing:-0.271px;">6240</div>
<div style="position:absolute;left:14px;top:435px;width:490px;height:11px;overflow:hidden;">
<div style="position:absolute;left:6px;top:1px;line-height:16px;text-align:left;white-space:nowrap;font-size:12.5px;color:#10107a;letter-spacing:0.256px;">Short self-test routine recommended polling time (in minutes)</div>
<div style="position:absolute;left:438px;top:1px;line-height:16px;text-align:left;white-space:nowrap;font-size:12.5px;color:#1010c0;">2</div>
</div>
<div style="position:absolute;left:526px;top:82px;width:154px;height:109px;border:1px solid #a4a4a4;"></div>
<div style="position:absolute;left:527px;top:83px;width:154px;height:109px;border:1px solid #ffffff;"></div>
<div style="position:absolute;left:535px;top:80px;width:97px;height:6px;background:#b9b9b9;"></div>
<div style="position:absolute;left:539px;top:75px;line-height:17px;text-align:left;white-space:nowrap;font-size:12.5px;color:#1a1a6e;letter-spacing:0.046px;">SMART monitor</div>
<div style="position:absolute;left:532px;top:96px;width:79px;height:31px;border:1px solid #f2f2f2;border-radius:3px;"></div>
<div style="position:absolute;left:533px;top:97px;width:77px;height:29px;border:1px solid #2c3c5a;border-radius:2px;background:linear-gradient(#eaf2fb,#c6dcf2 50%,#8ebbea);"></div>
<div style="position:absolute;left:532px;top:96px;width:79px;height:31px;line-height:31px;text-align:center;white-space:nowrap;font-size:12px;color:#0e0e58;">Get SMART</div>
<div style="position:absolute;left:618px;top:97px;width:58px;height:29px;background:#00f000;border:1px solid #000;"></div>
<div style="position:absolute;left:624px;top:103px;line-height:20px;text-align:left;white-space:nowrap;font-family:'Liberation Serif',serif;font-size:16px;font-weight:bold;color:#0a1450;letter-spacing:-0.964px;">GOOD</div>
<div style="position:absolute;left:535px;top:130px;line-height:17px;text-align:left;white-space:nowrap;font-size:12.5px;color:#e8e8e8;text-shadow:1px 1px 0 #a0a0a0;letter-spacing:0.059px;">Use IBM super smart:</div>
<div style="position:absolute;left:664px;top:131px;width:13px;height:13px;border-top:1px solid #a0a0a0;border-left:1px solid #a0a0a0;border-right:1px solid #f0f0f0;border-bottom:1px solid #f0f0f0;background:#c4c4c4;box-shadow:inset 1px 1px 0 #9a9a9a;"></div>
<svg style="position:absolute;left:665px;top:132px" width="10" height="10"><path d="M1.5 5 L4 7.5 L8.5 2" stroke="#e8e8e8" stroke-width="2" fill="none"/></svg>
<div style="position:absolute;left:532px;top:153px;width:62px;height:33px;border:1px solid #f2f2f2;border-radius:3px;"></div>
<div style="position:absolute;left:533px;top:154px;width:60px;height:31px;border:1px solid #505050;border-radius:2px;background:linear-gradient(#f0f0f0,#dcdcdc 50%,#c4c4c4);"></div>
<div style="position:absolute;left:537px;top:161px;line-height:17px;text-align:left;white-space:nowrap;font-size:12.5px;color:#2222c0;letter-spacing:-0.413px;">Open BIN</div>
<div style="position:absolute;left:601px;top:154px;width:13px;height:13px;background:#fff;border-top:1px solid #808080;border-left:1px solid #808080;border-right:1px solid #fff;border-bottom:1px solid #fff;box-shadow:inset 1px 1px 0 #404040, inset -1px -1px 0 #d8d8d8;"></div>
<svg style="position:absolute;left:602px;top:155px" width="11" height="11"><path d="M2 5 L4.5 8 L9.5 2" stroke="#000" stroke-width="2.2" fill="none"/></svg>
<div style="position:absolute;left:620px;top:154px;line-height:17px;text-align:left;white-space:nowrap;font-size:12.5px;color:#000;letter-spacing:-0.402px;">Save BIN</div>
<div style="position:absolute;left:601px;top:171px;width:13px;height:13px;background:#c8c8c8;border-top:1px solid #9a9a9a;border-left:1px solid #9a9a9a;border-right:1px solid #f0f0f0;border-bottom:1px solid #f0f0f0;box-shadow:inset 1px 1px 0 #a8a8a8;"></div>
<div style="position:absolute;left:621px;top:171px;line-height:17px;text-align:left;white-space:nowrap;font-size:12.5px;color:#e8e8e8;text-shadow:1px 1px 0 #a0a0a0;letter-spacing:-0.008px;">Crypt it!</div>
<div style="position:absolute;left:526px;top:203px;width:99px;height:120px;border:1px solid #a4a4a4;"></div>
<div style="position:absolute;left:527px;top:204px;width:99px;height:120px;border:1px solid #ffffff;"></div>
<div style="position:absolute;left:535px;top:201px;width:47px;height:6px;background:#b9b9b9;"></div>
<div style="position:absolute;left:539px;top:196px;line-height:17px;text-align:left;white-space:nowrap;font-size:12.5px;color:#1a1a6e;letter-spacing:-0.216px;">Control</div>
<div style="position:absolute;left:629px;top:203px;width:51px;height:120px;border:1px solid #a4a4a4;"></div>
<div style="position:absolute;left:630px;top:204px;width:51px;height:120px;border:1px solid #ffffff;"></div>
<div style="position:absolute;left:633px;top:201px;width:41px;height:6px;background:#b9b9b9;"></div>
<div style="position:absolute;left:637px;top:196px;line-height:17px;text-align:left;white-space:nowrap;font-size:14px;color:#1a1a6e;letter-spacing:-0.566px;">Timer</div>
<div style="position:absolute;left:531px;top:216px;width:42px;height:31px;border:1px solid #f2f2f2;border-radius:3px;"></div>
<div style="position:absolute;left:532px;top:217px;width:40px;height:29px;border:1px solid #2c3c5a;border-radius:2px;background:linear-gradient(#eaf2fb,#c6dcf2 50%,#8ebbea);"></div>
<div style="position:absolute;left:531px;top:220px;width:42px;height:31px;line-height:12px;text-align:center;white-space:nowrap;font-size:10px;color:#0e0e58;">SMART<br>ON</div>
<div style="position:absolute;left:579px;top:216px;width:42px;height:31px;border:1px solid #f2f2f2;border-radius:3px;"></div>
<div style="position:absolute;left:580px;top:217px;width:40px;height:29px;border:1px solid #2c3c5a;border-radius:2px;background:linear-gradient(#eaf2fb,#c6dcf2 50%,#8ebbea);"></div>
<div style="position:absolute;left:579px;top:220px;width:42px;height:31px;line-height:12px;text-align:center;white-space:nowrap;font-size:10px;color:#0e0e58;">SMART<br>OFF</div>
<div style="position:absolute;left:531px;top:253px;width:91px;height:30px;border:1px solid #f2f2f2;border-radius:3px;"></div>
<div style="position:absolute;left:532px;top:254px;width:89px;height:28px;border:1px solid #2c3c5a;border-radius:2px;background:linear-gradient(#eaf2fb,#c6dcf2 50%,#8ebbea);"></div>
<div style="position:absolute;left:531px;top:257px;width:91px;height:30px;line-height:12px;text-align:center;white-space:nowrap;font-size:10px;color:#0e0e58;">Auto Save<br>attributes ON</div>
<div style="position:absolute;left:531px;top:288px;width:91px;height:30px;border:1px solid #f2f2f2;border-radius:3px;"></div>
<div style="position:absolute;left:532px;top:289px;width:89px;height:28px;border:1px solid #2c3c5a;border-radius:2px;background:linear-gradient(#eaf2fb,#c6dcf2 50%,#8ebbea);"></div>
<div style="position:absolute;left:531px;top:292px;width:91px;height:30px;line-height:12px;text-align:center;white-space:nowrap;font-size:10px;color:#0e0e58;">Auto Save<br>attributes OFF</div>
<div style="position:absolute;left:634px;top:219px;width:43px;height:23px;background:#eeeefc;border-top:1px solid #696969;border-left:1px solid #696969;border-right:1px solid #fff;border-bottom:1px solid #fff;"></div>
<div style="position:absolute;left:638px;top:222px;line-height:16px;text-align:left;white-space:nowrap;font-size:13px;color:#10107a;">60</div>
<div style="position:absolute;left:635px;top:241px;line-height:14px;text-align:left;white-space:nowrap;font-size:11px;color:#000;letter-spacing:-0.201px;">[ period ]</div>
<div style="position:absolute;left:635px;top:269px;width:12px;height:13px;background:#fff;border-top:1px solid #909090;border-left:1px solid #909090;"></div>
<div style="position:absolute;left:653px;top:268px;line-height:17px;text-align:left;white-space:nowrap;font-size:13px;color:#000;">ON</div>
<div style="position:absolute;left:635px;top:299px;width:21px;height:9px;background:#8a8a8a;border:1px solid #404040;"></div>
<div style="position:absolute;left:526px;top:336px;width:154px;height:110px;border:1px solid #a4a4a4;"></div>
<div style="position:absolute;left:527px;top:337px;width:154px;height:110px;border:1px solid #ffffff;"></div>
<div style="position:absolute;left:535px;top:334px;width:99px;height:6px;background:#b9b9b9;"></div>
<div style="position:absolute;left:539px;top:329px;line-height:17px;text-align:left;white-space:nowrap;font-size:12.5px;color:#1a1a6e;letter-spacing:0.035px;">SMART test box</div>
<div style="position:absolute;left:531px;top:353px;width:145px;height:22px;background:#cce8cc;border-top:1px solid #8a8a8a;border-left:1px solid #8a8a8a;border-right:1px solid #fff;border-bottom:1px solid #fff;"></div>
<div style="position:absolute;left:535px;top:356px;line-height:17px;text-align:left;white-space:nowrap;font-size:13px;color:#000;">Off-line data collect</div>
<div style="position:absolute;left:657px;top:355px;width:17px;height:18px;background:linear-gradient(#fafafa,#e0e0e0);border:1px solid #d8d8d8;"></div>
<svg style="position:absolute;left:661px;top:362px" width="8" height="5"><path d="M0 0 L8 0 L4 4.5 Z" fill="#000"/></svg>
<div style="position:absolute;left:532px;top:394px;width:46px;height:28px;border:1px solid #f2f2f2;border-radius:3px;"></div>
<div style="position:absolute;left:533px;top:395px;width:44px;height:26px;border:1px solid #2c3c5a;border-radius:2px;background:linear-gradient(#eaf2fb,#c6dcf2 50%,#8ebbea);border-color:#3a3ad0;box-shadow:inset 0 0 0 1px #7a7af0;"></div>
<div style="position:absolute;left:532px;top:394px;width:46px;height:28px;line-height:28px;text-align:center;white-space:nowrap;font-size:12.5px;color:#0e0e58;">Begin</div>
<div style="position:absolute;left:583px;top:394px;width:46px;height:28px;border:1px solid #f2f2f2;border-radius:3px;"></div>
<div style="position:absolute;left:584px;top:395px;width:44px;height:26px;border:1px solid #2c3c5a;border-radius:2px;background:linear-gradient(#eaf2fb,#c6dcf2 50%,#8ebbea);"></div>
<div style="position:absolute;left:583px;top:394px;width:46px;height:28px;line-height:28px;text-align:center;white-space:nowrap;font-size:12.5px;color:#0e0e58;">Abort</div>
<div style="position:absolute;left:635px;top:396px;width:41px;height:23px;background:#eeeefc;border-top:1px solid #696969;border-left:1px solid #696969;border-right:1px solid #fff;border-bottom:1px solid #fff;"></div>
<div style="position:absolute;left:639px;top:400px;line-height:16px;text-align:left;white-space:nowrap;font-size:13px;color:#a0a0a0;">0</div>
<div style="position:absolute;left:531px;top:431px;width:145px;height:8px;background:#878787;border-bottom:1px solid #fff;border-right:1px solid #fff;border-top:1px solid #6a6a6a;border-left:1px solid #6a6a6a;"></div>
<div style="position:absolute;left:686px;top:73px;width:71px;height:406px;background:#5e6d80;border-left:1px solid #808080;"></div>
<div style="position:absolute;left:693px;top:89px;width:63px;height:45px;border:1px solid #f4f4f4;border-radius:4px;"></div>
<div style="position:absolute;left:694px;top:90px;width:61px;height:43px;border:1px solid #101010;border-radius:3px;background:linear-gradient(#ff4040,#f00000 50%,#e00000);"></div>
<div style="position:absolute;left:699px;top:104px;line-height:17px;text-align:left;white-space:nowrap;font-size:12.5px;color:#ffffff;letter-spacing:0.207px;">Break All</div>
<div style="position:absolute;left:711px;top:141px;width:28px;height:9px;background:#8a8a8a;border:1px solid #202020;"></div>
<div style="position:absolute;left:693px;top:173px;width:63px;height:25px;border:1px solid #f4f4f4;border-radius:4px;"></div>
<div style="position:absolute;left:694px;top:174px;width:61px;height:23px;border:1px solid #101010;border-radius:3px;background:linear-gradient(#a8a8a8,#6a6a6a 55%,#4a4a4a);"></div>
<div style="position:absolute;left:708px;top:178px;line-height:17px;text-align:left;white-space:nowrap;font-size:12.5px;color:#f4f4ec;letter-spacing:0.004px;"><u>S</u>leep</div>
<div style="position:absolute;left:693px;top:217px;width:63px;height:25px;border:1px solid #f4f4f4;border-radius:4px;"></div>
<div style="position:absolute;left:694px;top:218px;width:61px;height:23px;border:1px solid #101010;border-radius:3px;background:linear-gradient(#a8a8a8,#6a6a6a 55%,#4a4a4a);"></div>
<div style="position:absolute;left:708px;top:222px;line-height:17px;text-align:left;white-space:nowrap;font-size:12.5px;color:#f4f4ec;letter-spacing:-0.350px;">Re<u>c</u>all</div>
<div style="position:absolute;left:693px;top:339px;width:26px;height:13px;background:#8a8a8a;border:1px solid #141414;"></div>
<div style="position:absolute;left:733px;top:339px;width:24px;height:13px;background:#8a8a8a;border:1px solid #141414;border-right:none;"></div>
<div style="position:absolute;left:696px;top:352px;line-height:17px;text-align:left;white-space:nowrap;font-size:12.5px;color:#0a1430;">Rd</div>
<div style="position:absolute;left:736px;top:352px;line-height:17px;text-align:left;white-space:nowrap;font-size:12.5px;color:#0a1430;">Wrt</div>
<div style="position:absolute;left:693px;top:375px;width:63px;height:25px;border:1px solid #f4f4f4;border-radius:4px;"></div>
<div style="position:absolute;left:694px;top:376px;width:61px;height:23px;border:1px solid #101010;border-radius:3px;background:linear-gradient(#d01010,#a00000 50%,#600000);"></div>
<div style="position:absolute;left:708px;top:379px;line-height:17px;text-align:left;white-space:nowrap;font-size:12.5px;color:#ffffff;letter-spacing:-0.188px;">Passp</div>
<div style="position:absolute;left:693px;top:421px;width:63px;height:25px;border:1px solid #f4f4f4;border-radius:4px;"></div>
<div style="position:absolute;left:694px;top:422px;width:61px;height:23px;border:1px solid #101010;border-radius:3px;background:linear-gradient(#1818d0,#0000a0 50%,#000058);"></div>
<div style="position:absolute;left:707px;top:425px;line-height:17px;text-align:left;white-space:nowrap;font-size:12.5px;color:#f4f0b0;letter-spacing:-0.109px;"><u>P</u>ower</div>
<div style="position:absolute;left:686px;top:478px;width:71px;height:103px;background:#b9b9b9;border-left:1px solid #808080;border-top:2px solid #d8d8d8;"></div>
<div style="position:absolute;left:693px;top:489px;width:12px;height:12px;background:#fff;"></div>
<div style="position:absolute;left:710px;top:486px;line-height:18px;text-align:left;white-space:nowrap;font-size:15px;font-weight:bold;color:#10106e;letter-spacing:-1.750px;">sound</div>
<div style="position:absolute;left:693px;top:536px;line-height:15px;text-align:left;white-space:nowrap;font-size:11.5px;color:#000;letter-spacing:-0.748px;">API number</div>
<div style="position:absolute;left:692px;top:552px;width:66px;height:24px;background:#fff;border:1px solid #d0d0d0;"></div>
<div style="position:absolute;left:693px;top:553px;width:14px;height:22px;background:#f0f0f0;border-right:1px solid #c8c8c8;"></div>
<div style="position:absolute;left:745px;top:553px;width:13px;height:22px;background:#f0f0f0;border-left:1px solid #c8c8c8;"></div>
<div style="position:absolute;left:696px;top:563px;width:8px;height:2px;background:#9ab4d8;"></div>
<div style="position:absolute;left:749px;top:562px;width:8px;height:2px;background:#9ab4d8;"></div>
<div style="position:absolute;left:752px;top:559px;width:2px;height:8px;background:#9ab4d8;"></div>
<div style="position:absolute;left:707px;top:554px;width:38px;line-height:20px;text-align:center;white-space:nowrap;font-size:14px;font-weight:bold;color:#10107a;">1</div>
<div style="position:absolute;left:8px;top:452px;width:678px;height:129px;background:#b9b9b9;"></div>
<div style="position:absolute;left:9px;top:456px;width:676px;height:125px;background:#e9ffe9;border-top:1px solid #696969;border-left:1px solid #696969;border-right:1px solid #fff;border-bottom:1px solid #fff;"></div>
<div style="position:absolute;left:10px;top:475px;width:657px;height:1px;background:#dcf0dc;"></div>
<div style="position:absolute;left:10px;top:492px;width:657px;height:1px;background:#dcf0dc;"></div>
<div style="position:absolute;left:10px;top:509px;width:657px;height:1px;background:#dcf0dc;"></div>
<div style="position:absolute;left:10px;top:526px;width:657px;height:1px;background:#dcf0dc;"></div>
<div style="position:absolute;left:10px;top:543px;width:657px;height:1px;background:#dcf0dc;"></div>
<div style="position:absolute;left:10px;top:560px;width:657px;height:1px;background:#dcf0dc;"></div>
<div style="position:absolute;left:76px;top:457px;width:1px;height:108px;background:#e2f6e2;"></div>
<div style="position:absolute;left:16px;top:460px;line-height:16px;text-align:left;white-space:nowrap;font-size:12.5px;color:#000;letter-spacing:0.475px;">15:22:07</div>
<div style="position:absolute;left:81px;top:460px;line-height:16px;text-align:left;white-space:nowrap;font-size:12.5px;color:#000;letter-spacing:0.123px;">Get S.M.A.R.T. command... OK</div>
<div style="position:absolute;left:16px;top:477px;line-height:16px;text-align:left;white-space:nowrap;font-size:12.5px;color:#000;letter-spacing:0.475px;">15:22:07</div>
<div style="position:absolute;left:81px;top:477px;line-height:16px;text-align:left;white-space:nowrap;font-size:12.5px;color:#000;letter-spacing:-0.087px;">SMART status = GOOD</div>
<div style="position:absolute;left:16px;top:494px;line-height:16px;text-align:left;white-space:nowrap;font-size:12.5px;color:#000;letter-spacing:0.475px;">15:22:17</div>
<div style="position:absolute;left:81px;top:494px;line-height:16px;text-align:left;white-space:nowrap;font-size:12.5px;color:#000;letter-spacing:0.028px;">Get passport... OK</div>
<div style="position:absolute;left:16px;top:511px;line-height:16px;text-align:left;white-space:nowrap;font-size:12.5px;color:#000;letter-spacing:0.475px;">15:22:17</div>
<div style="position:absolute;left:81px;top:511px;line-height:16px;text-align:left;white-space:nowrap;font-size:12.5px;color:#000;letter-spacing:0.069px;">Recallibration... OK</div>
<div style="position:absolute;left:16px;top:528px;line-height:16px;text-align:left;white-space:nowrap;font-size:12.5px;color:#000;letter-spacing:0.475px;">15:22:17</div>
<div style="position:absolute;left:81px;top:528px;line-height:16px;text-align:left;white-space:nowrap;font-size:12.5px;color:#000;letter-spacing:0.136px;">Starting Reading, LBA=0..976773167, sequential access, timeout 10000ms</div>
<div style="position:absolute;left:16px;top:545px;line-height:16px;text-align:left;white-space:nowrap;font-size:12.5px;color:#000;letter-spacing:0.475px;">16:30:23</div>
<div style="position:absolute;left:81px;top:544px;line-height:16px;text-align:left;white-space:nowrap;font-size:15px;color:#1a30c8;letter-spacing:2.203px;">*****</div>
<div style="position:absolute;left:126px;top:545px;line-height:16px;text-align:left;white-space:nowrap;font-size:12.5px;color:#1a30c8;letter-spacing:0.254px;">Scan results: no warnings, no errors</div>
<div style="position:absolute;left:340px;top:544px;line-height:16px;text-align:left;white-space:nowrap;font-size:15px;color:#1a30c8;letter-spacing:2.203px;">*****</div>
<div style="position:absolute;left:667px;top:457px;width:17px;height:108px;background:linear-gradient(90deg,#e4e4e4,#f4f4f4);"></div>
<svg style="position:absolute;left:672px;top:464px" width="7" height="4"><path d="M0 4 L3.5 0 L7 4 Z" fill="#4a4a4a"/></svg>
<svg style="position:absolute;left:672px;top:554px" width="7" height="4"><path d="M0 0 L3.5 4 L7 0 Z" fill="#4a4a4a"/></svg>
<div style="position:absolute;left:667px;top:518px;width:15px;height:28px;border:1px solid #8a8a8a;border-radius:2px;background:linear-gradient(90deg,#f8f8f8,#e6e6e6 50%,#cfcfcf);"></div>
<div style="position:absolute;left:671px;top:528px;width:6px;height:1px;background:#505050;"></div>
<div style="position:absolute;left:671px;top:530px;width:6px;height:1px;background:#505050;"></div>
<div style="position:absolute;left:671px;top:532px;width:6px;height:1px;background:#505050;"></div>
<div style="position:absolute;left:671px;top:534px;width:6px;height:1px;background:#505050;"></div>
<div style="position:absolute;left:10px;top:565px;width:657px;height:16px;background:linear-gradient(#e4e4e4,#f4f4f4);border-top:1px solid #b0b0b0;"></div>
<svg style="position:absolute;left:15px;top:569px" width="4" height="8"><path d="M4 0 L0 4 L4 8 Z" fill="#4a4a4a"/></svg>
<svg style="position:absolute;left:657px;top:569px" width="4" height="8"><path d="M0 0 L4 4 L0 8 Z" fill="#4a4a4a"/></svg>
<div style="position:absolute;left:28px;top:565px;width:470px;height:15px;border:1px solid #8a8a8a;border-radius:2px;background:linear-gradient(#f6f6f6,#e6e6e6 45%,#d4d4d4 50%,#cacaca);"></div>
<div style="position:absolute;left:259px;top:569px;width:2px;height:7px;background:linear-gradient(#303030,#707070);"></div>
<div style="position:absolute;left:262px;top:569px;width:2px;height:7px;background:linear-gradient(#303030,#707070);"></div>
<div style="position:absolute;left:265px;top:569px;width:2px;height:7px;background:linear-gradient(#303030,#707070);"></div>
<div style="position:absolute;left:667px;top:565px;width:17px;height:16px;background:#f0f0f0;"></div>
</body></html>
